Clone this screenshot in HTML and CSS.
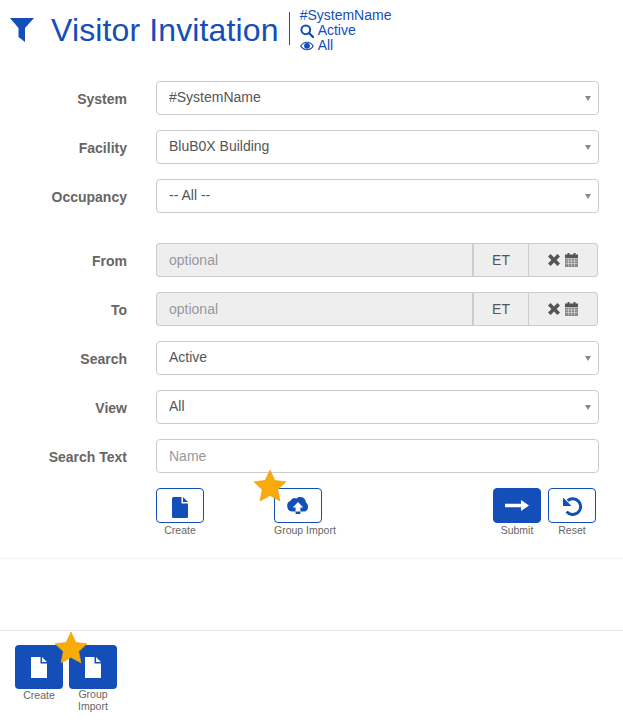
FILE: index.html
```html
<!DOCTYPE html>
<html lang="en">
  <head>
    <meta charset="UTF-8" />
    <title>Visitor Invitation</title>
    <link rel="stylesheet" href="styles.css">
  </head>
  <body>
    <header class="page-header">
      <svg class="filter-icon" viewBox="0 0 24 24"><path d="M0 0H24L15 10V24L8.5 19V10Z" /></svg>
      <h1>Visitor Invitation</h1>
      <span class="header-rule"></span>
      <div class="summary">
        <div>#SystemName</div>
        <div>
          <svg class="summary-icon" viewBox="0 0 14 14"><circle cx="5.8" cy="5.8" r="4.4" fill="none" stroke="currentColor" stroke-width="2" /><path d="M9 9L13 13" stroke="currentColor" stroke-width="2.4" stroke-linecap="round" /></svg>
          Active
        </div>
        <div>
          <svg class="summary-icon" viewBox="0 0 14 14"><path fill-rule="evenodd" d="M0 7C3.5 1.2 10.5 1.2 14 7C10.5 12.8 3.5 12.8 0 7ZM1.4 7C4.4 11.2 9.6 11.2 12.6 7C9.6 2.8 4.4 2.8 1.4 7Z" /><circle cx="7" cy="6.8" r="2.9" /></svg>
          All
        </div>
      </div>
    </header>

    <form class="filter-form">
      <div class="row">
        <label>System</label>
        <div class="select-wrap"><select><option>#SystemName</option></select></div>
      </div>
      <div class="row">
        <label>Facility</label>
        <div class="select-wrap"><select><option>BluB0X Building</option></select></div>
      </div>
      <div class="row row-spaced">
        <label>Occupancy</label>
        <div class="select-wrap"><select><option>-- All --</option></select></div>
      </div>

      <div class="row">
        <label>From</label>
        <div class="date-group">
          <input type="text" placeholder="optional" disabled />
          <span class="addon addon-zone">ET</span>
          <span class="addon addon-tools">
            <svg class="times-icon" viewBox="0 0 12 12"><path d="M0 2.6L2.6 0L6 3.4L9.4 0L12 2.6L8.6 6L12 9.4L9.4 12L6 8.6L2.6 12L0 9.4L3.4 6Z" /></svg>
            <svg class="calendar-icon" viewBox="0 0 13 14"><path d="M0 1.5H2.5V0H4.5V1.5H8.5V0H10.5V1.5H13V5H0Z" /><path d="M0 5.5H13V14H0Z" opacity=".65" /><path d="M0.5 8H12.5M0.5 10.5H12.5M3.5 6V13.5M6.5 6V13.5M9.5 6V13.5" stroke="#eeeeee" stroke-width=".5" /></svg>
          </span>
        </div>
      </div>
      <div class="row">
        <label>To</label>
        <div class="date-group">
          <input type="text" placeholder="optional" disabled />
          <span class="addon addon-zone">ET</span>
          <span class="addon addon-tools">
            <svg class="times-icon" viewBox="0 0 12 12"><path d="M0 2.6L2.6 0L6 3.4L9.4 0L12 2.6L8.6 6L12 9.4L9.4 12L6 8.6L2.6 12L0 9.4L3.4 6Z" /></svg>
            <svg class="calendar-icon" viewBox="0 0 13 14"><path d="M0 1.5H2.5V0H4.5V1.5H8.5V0H10.5V1.5H13V5H0Z" /><path d="M0 5.5H13V14H0Z" opacity=".65" /><path d="M0.5 8H12.5M0.5 10.5H12.5M3.5 6V13.5M6.5 6V13.5M9.5 6V13.5" stroke="#eeeeee" stroke-width=".5" /></svg>
          </span>
        </div>
      </div>
      <div class="row">
        <label>Search</label>
        <div class="select-wrap"><select><option>Active</option></select></div>
      </div>
      <div class="row">
        <label>View</label>
        <div class="select-wrap"><select><option>All</option></select></div>
      </div>
      <div class="row">
        <label>Search Text</label>
        <input class="text-input" type="text" placeholder="Name" />
      </div>

      <div class="actions">
        <div class="action-group action-group-left">
          <div class="action">
            <button type="button" class="icon-btn">
              <svg class="btn-icon file-icon" viewBox="0 0 16 21"><path d="M0 1.5Q0 0 1.5 0H9.5V6.5H16V19.5Q16 21 14.5 21H1.5Q0 21 0 19.5ZM11 0L16 5H11Z" /></svg>
            </button>
            <span class="action-label action-label-center">Create</span>
          </div>
          <div class="action">
            <svg class="star" viewBox="0 0 34 33"><path d="M17 1L21.8 11.4L33 12.8L24.8 20.6L27 32L17 26.4L7 32L9.2 20.6L1 12.8L12.2 11.4Z" /></svg>
            <button type="button" class="icon-btn">
              <svg class="btn-icon cloud-icon" viewBox="0 0 22 17"><path d="M5 14.5A5 5.5 0 0 1 3.6 3.8A4.5 5 0 0 1 9.4 1.6A5.8 6.5 0 0 1 19 5.6A4.2 4.8 0 0 1 17.4 14.5H13.4V17H8.6V14.5ZM8.6 14.5H13.4V10.5H16.2L11 5L5.8 10.5H8.6Z" fill-rule="evenodd" /></svg>
            </button>
            <span class="action-label">Group Import</span>
          </div>
        </div>
        <div class="action-group">
          <div class="action">
            <button type="button" class="icon-btn icon-btn-solid">
              <svg class="btn-icon arrow-icon" viewBox="0 0 24 11"><path d="M0 3.7H16V0L24 5.5L16 11V7.3H0Z" /></svg>
            </button>
            <span class="action-label action-label-center">Submit</span>
          </div>
          <div class="action">
            <button type="button" class="icon-btn">
              <svg class="btn-icon undo-icon" viewBox="0 0 22 20"><path d="M6.6 4.6A7.9 7.9 0 1 1 5.6 15.6" fill="none" stroke="#134eb9" stroke-width="3" /><path d="M2 1.5V10H10.5Z" /></svg>
            </button>
            <span class="action-label action-label-center">Reset</span>
          </div>
        </div>
      </div>
    </form>

    <footer class="footer-bar">
      <div class="footer-action">
        <button type="button" class="footer-btn">
          <svg class="footer-icon" viewBox="0 0 16 21"><path d="M0 0H9.5V6.5H16V21H0ZM11 0L16 5H11Z" /></svg>
        </button>
        <span class="action-label action-label-center footer-label">Create</span>
      </div>
      <div class="footer-action">
        <svg class="star star-footer" viewBox="0 0 34 33"><path d="M17 1L21.8 11.4L33 12.8L24.8 20.6L27 32L17 26.4L7 32L9.2 20.6L1 12.8L12.2 11.4Z" /></svg>
        <button type="button" class="footer-btn">
          <svg class="footer-icon" viewBox="0 0 16 21"><path d="M0 0H9.5V6.5H16V21H0ZM11 0L16 5H11Z" /></svg>
        </button>
        <span class="action-label action-label-center footer-label-tight">Group Import</span>
      </div>
    </footer>
  </body>
</html>
```

FILE: styles.css
```css
* {
  box-sizing: border-box;
}

body {
  font-family: "Liberation Sans", Arial, sans-serif;
  background-color: #ffffff;
  color: #555555;
  margin: 0;
  font-size: 14px;
}

.page-header {
  display: flex;
  align-items: flex-start;
  height: 81px;
  padding: 8px 0 0 10px;
  color: #134eb9;
}

.filter-icon {
  width: 24px;
  height: 24px;
  fill: #134eb9;
  margin: 10px 17px 0 0;
}

.page-header h1 {
  margin: 2px 10px 0 0;
  font-size: 32px;
  font-weight: normal;
  line-height: 40px;
  letter-spacing: 0.13px;
}

.header-rule {
  width: 1px;
  height: 33px;
  margin: 4px 10px 0 0;
  background: #134eb9;
}

.summary {
  font-size: 14px;
  line-height: 15px;
}

.summary div {
  display: flex;
  align-items: center;
  gap: 4px;
  height: 15px;
}

.summary-icon {
  width: 14px;
  height: 14px;
  fill: currentColor;
}

.filter-form {
  border-bottom: 1px solid #f3f3f3;
}

.row {
  display: flex;
  align-items: center;
  height: 34px;
  margin-bottom: 15px;
}

.row-spaced {
  margin-bottom: 30px;
}

.row label {
  width: 127px;
  margin-right: 29px;
  padding-top: 2px;
  text-align: right;
  font-weight: bold;
  color: #666666;
}

.select-wrap {
  position: relative;
  width: 443px;
  height: 34px;
}

.select-wrap::after {
  content: "";
  position: absolute;
  right: 8px;
  top: 15px;
  border-left: 3px solid transparent;
  border-right: 3px solid transparent;
  border-top: 5px solid #888888;
}

select,
.text-input {
  display: block;
  width: 443px;
  height: 34px;
  padding: 0 12px;
  border: 1px solid #cccccc;
  border-radius: 4px;
  background: #ffffff;
  font-family: inherit;
  font-size: 14px;
  color: #555555;
}

select {
  appearance: none;
  -webkit-appearance: none;
  padding-bottom: 3px;
}

input::placeholder {
  color: #999999;
  opacity: 1;
}

.date-group {
  display: flex;
  width: 442px;
  height: 34px;
}

.date-group input {
  flex: 1;
  min-width: 0;
  padding: 0 12px;
  border: 1px solid #cccccc;
  border-right-width: 2px;
  border-radius: 4px 0 0 4px;
  background: #eeeeee;
  font-family: inherit;
  font-size: 14px;
}

.addon {
  display: flex;
  align-items: center;
  justify-content: center;
  background: #eeeeee;
  border: 1px solid #cccccc;
  border-left: none;
  color: #555555;
}

.addon-zone {
  width: 55px;
}

.addon-tools {
  width: 69px;
  gap: 5px;
  border-radius: 0 4px 4px 0;
}

.times-icon {
  width: 12px;
  height: 12px;
  fill: #555555;
}

.calendar-icon {
  width: 13px;
  height: 14px;
  fill: #555555;
}

.actions {
  display: flex;
  justify-content: space-between;
  padding: 0 27px 0 156px;
  height: 70px;
}

.action-group {
  display: flex;
  gap: 7px;
}

.action-group-left {
  gap: 70px;
}

.action {
  position: relative;
  width: 48px;
}

.icon-btn {
  display: flex;
  align-items: center;
  justify-content: center;
  width: 48px;
  height: 35px;
  padding: 0;
  border: 1px solid #134eb9;
  border-radius: 4px;
  background: #ffffff;
  fill: #134eb9;
}

.icon-btn-solid {
  background: #134eb9;
  fill: #ffffff;
}

.btn-icon {
  display: block;
}

.file-icon {
  width: 16px;
  height: 21px;
  margin-top: 3px;
}

.cloud-icon {
  width: 22px;
  height: 17px;
}

.arrow-icon {
  width: 24px;
  height: 11px;
}

.undo-icon {
  width: 22px;
  height: 20px;
}

.action-label {
  display: block;
  margin-top: 1px;
  font-size: 10.5px;
  line-height: 13px;
  color: #666666;
  white-space: nowrap;
}

.action-label-center {
  text-align: center;
}

.star {
  position: absolute;
  left: -21px;
  top: -19px;
  width: 34px;
  height: 33px;
  fill: #f8ab0a;
  stroke: #e59d0c;
  stroke-width: 0.6;
  stroke-linejoin: round;
}

.footer-bar {
  display: flex;
  gap: 6px;
  margin-top: 71px;
  padding: 14px 0 0 15px;
  border-top: 1px solid #e5e5e5;
}

.footer-action {
  position: relative;
  width: 48px;
}

.footer-btn {
  display: flex;
  align-items: center;
  justify-content: center;
  width: 48px;
  height: 44px;
  padding: 0;
  border: none;
  border-radius: 4px;
  background: #134eb9;
  fill: #ffffff;
}

.footer-icon {
  width: 16px;
  height: 21px;
}

.footer-label {
  margin-top: 0;
}

.footer-label-tight {
  white-space: normal;
  margin-top: -1px;
  line-height: 12px;
}

.star-footer {
  left: -15px;
  top: -14px;
}
```
